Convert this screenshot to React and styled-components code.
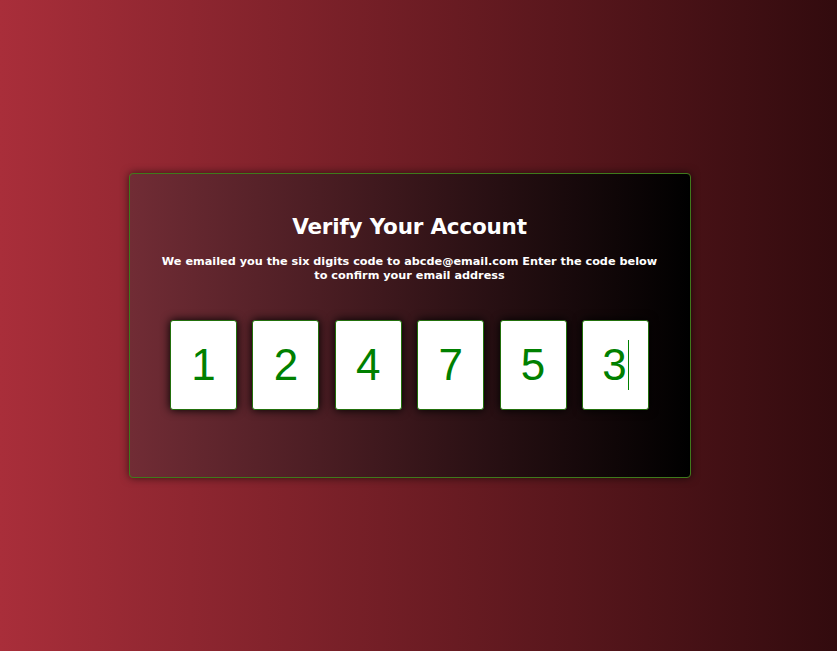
import React from "react";
import styled, { createGlobalStyle } from "styled-components";

const Global = createGlobalStyle`
  html, body { margin: 0; padding: 0; }
  body {
    font-family: "DejaVu Sans", "Liberation Sans", sans-serif;
    background: linear-gradient(to right, #a92e3a, #320b0e);
    min-height: 100vh;
  }
`;

const Page = styled.div`
  height: 651px;
  box-sizing: border-box;
  padding-right: 18px;
  display: flex;
  align-items: center;
  justify-content: center;
`;

const Card = styled.div`
  width: 562px;
  height: 305px;
  box-sizing: border-box;
  border: 1px solid #3f7a1c;
  border-radius: 4px;
  background: linear-gradient(to right, #712c35, #000000);
  box-shadow: 0 0 8px rgba(0, 0, 0, 0.6);
  display: flex;
  flex-direction: column;
  align-items: center;
  padding-top: 38px;
`;

const Title = styled.h1`
  margin: 0;
  color: #ffffff;
  font-family: "DejaVu Sans", sans-serif;
  font-weight: bold;
  font-size: 21.5px;
  line-height: 30px;
  letter-spacing: -0.2px;
`;

const Sub = styled.p`
  margin: 13px 0 0;
  width: 502px;
  text-align: center;
  color: #ffffff;
  font-family: "DejaVu Sans", sans-serif;
  font-weight: bold;
  font-size: 11.25px;
  line-height: 14px;
`;

const Row = styled.div`
  margin-top: 37px;
  display: flex;
  gap: 15.4px;
`;

const Box = styled.div`
  position: relative;
  width: 67px;
  height: 90px;
  box-sizing: border-box;
  background: #ffffff;
  border: 1px solid #22700c;
  border-radius: 3px;
  box-shadow: 0 0 10px #000000;
  display: flex;
  align-items: center;
  justify-content: center;
  color: #008000;
  font-family: "Liberation Sans", Arial, sans-serif;
  font-size: 44px;
`;

const Caret = styled.span`
  display: inline-block;
  width: 1px;
  height: 50px;
  margin-left: 1px;
  background: #008000;
`;

const digits = ["1", "2", "4", "7", "5", "3"];

export default function App() {
  return (
    <>
      <Global />
      <Page>
        <Card>
          <Title>Verify Your Account</Title>
          <Sub>
            We emailed you the six digits code to abcde@email.com Enter the code below to confirm your email address
          </Sub>
          <Row>
            {digits.map((d, i) => (
              <Box key={i}>
                {d}
                {i === digits.length - 1 && <Caret />}
              </Box>
            ))}
          </Row>
        </Card>
      </Page>
    </>
  );
}
